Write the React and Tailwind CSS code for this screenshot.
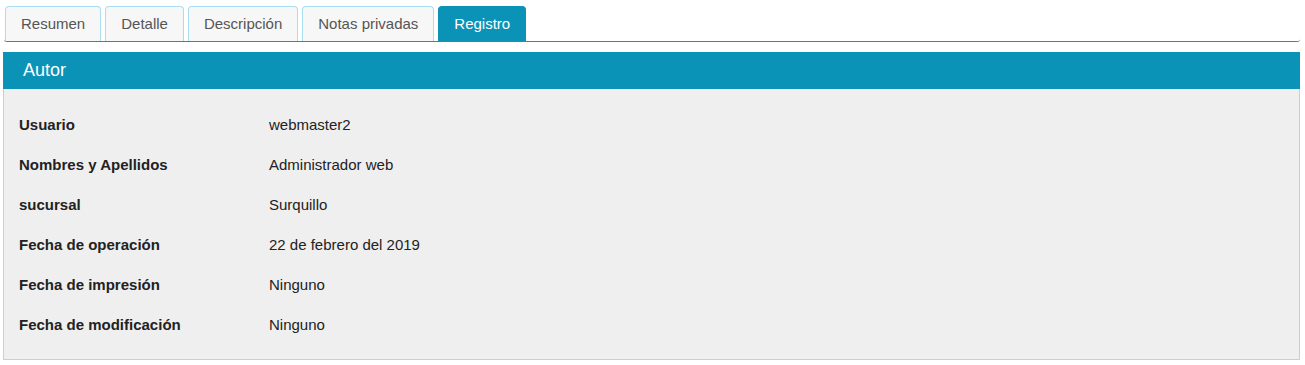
import React from "react";

const tabs = ["Resumen", "Detalle", "Descripción", "Notas privadas", "Registro"];
const rows = [
  ["Usuario", "webmaster2"],
  ["Nombres y Apellidos", "Administrador web"],
  ["sucursal", "Surquillo"],
  ["Fecha de operación", "22 de febrero del 2019"],
  ["Fecha de impresión", "Ninguno"],
  ["Fecha de modificación", "Ninguno"],
];

export default function App() {
  return (
    <div className="w-[1305px] h-[365px] bg-white pt-[6px] pl-[3px] pr-[5px]" style={{ fontFamily: '"Liberation Sans", Arial, sans-serif' }}>
      <div className="ml-[1px] flex items-end gap-[4px] border-b border-[#3f7fb4] rounded-b-[3px] pl-[1px] h-[36px]">
        {tabs.map((t, i) => {
          const active = i === tabs.length - 1;
          return (
            <div
              key={t}
              className={
                "h-[35px] px-[15px] flex items-center rounded-t-[4px] border border-b-0 text-[15px] " +
                (active
                  ? "bg-[#0b93b7] border-[#0b93b7] text-white"
                  : "bg-[#f7f7f7] border-[#a8def0] text-[#555555]")
              }
            >
              {t}
            </div>
          );
        })}
      </div>
      <div className="mt-[10px]">
        <div className="h-[37px] bg-[#0b93b7] text-white text-[18px] flex items-center pl-[20px]">Autor</div>
        <div className="bg-[#efefef] border border-t-0 border-[#a0def2] pt-[16px] pb-[14px] pl-[15px]">
          {rows.map(([k, v]) => (
            <div key={k} className="h-[40px] flex items-center text-[15px] text-[#222222]">
              <div className="w-[250px] font-bold">{k}</div>
              <div>{v}</div>
            </div>
          ))}
        </div>
      </div>
    </div>
  );
}
